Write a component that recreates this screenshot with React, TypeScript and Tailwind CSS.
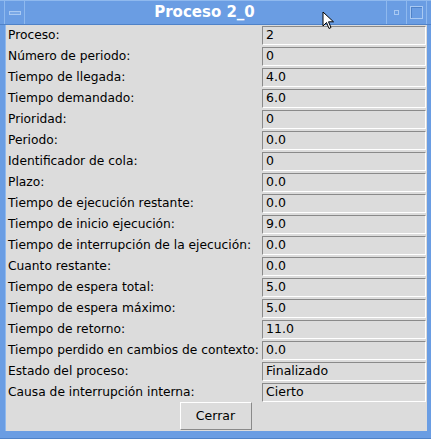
import React from "react";

const rows: [string, string][] = [
  ["Proceso:", "2"],
  ["Número de periodo:", "0"],
  ["Tiempo de llegada:", "4.0"],
  ["Tiempo demandado:", "6.0"],
  ["Prioridad:", "0"],
  ["Periodo:", "0.0"],
  ["Identificador de cola:", "0"],
  ["Plazo:", "0.0"],
  ["Tiempo de ejecución restante:", "0.0"],
  ["Tiempo de inicio ejecución:", "9.0"],
  ["Tiempo de interrupción de la ejecución:", "0.0"],
  ["Cuanto restante:", "0.0"],
  ["Tiempo de espera total:", "5.0"],
  ["Tiempo de espera máximo:", "5.0"],
  ["Tiempo de retorno:", "11.0"],
  ["Tiempo perdido en cambios de contexto:", "0.0"],
  ["Estado del proceso:", "Finalizado"],
  ["Causa de interrupción interna:", "Cierto"],
];

export default function App() {
  return (
    <div className="relative w-[431px] h-[439px] bg-[#6a9de3] flex flex-col font-['DejaVu_Sans',sans-serif] overflow-hidden">
      {/* Title bar */}
      <div className="h-[25px] flex items-stretch border-t border-[#8fb9ee] border-b border-b-[#4f82c8]">
        <div className="w-[5px] border-r border-[#8fb9ee]" />
        <div className="w-[20px] border-r border-[#8fb9ee] flex items-center justify-center">
          <div className="w-[12px] h-[4px] border border-[#a9c9f2] bg-[#7aa8e6]" />
        </div>
        <div className="flex-1 flex items-center justify-center text-white font-bold text-[15px] pr-[2px]">
          Proceso 2_0
        </div>
        <div className="w-[20px] border-l border-[#8fb9ee] flex items-center justify-center">
          <div className="w-[5px] h-[5px] border border-[#a9c9f2]" />
        </div>
        <div className="w-[20px] border-l border-[#8fb9ee] flex items-center justify-center">
          <div className="w-[13px] h-[13px] border border-[#a9c9f2] shadow-[inset_1px_1px_0_#4f82c8]" />
        </div>
        <div className="w-[5px] border-l border-[#8fb9ee]" />
      </div>
      {/* Body */}
      <div className="flex-1 flex pl-[5px] pr-[4px] pb-[7px] border-b border-[#4f82c8]">
        <div className="flex-1 bg-[#dcdcdc] flex flex-col pt-[1px] border-l border-[#8fb9ee]">
          <div className="flex flex-col gap-[2px]">
            {rows.map(([l, v]) => (
              <div key={l} className="flex h-[19px] items-center">
                <div className="w-[256px] pl-[2px] text-[12.25px] text-black leading-none whitespace-nowrap">{l}</div>
                <div className="flex-1 mr-[1px] h-[19px] border border-t-[#8a8a8a] border-l-[#8a8a8a] border-b-white border-r-white bg-[#dcdcdc] flex items-center pl-[3px] text-[12.5px] text-black leading-none">
                  {v}
                </div>
              </div>
            ))}
          </div>
          <div className="flex-1 flex justify-center items-end">
            <button className="w-[72px] h-[28px] mb-[1px] mr-[2px] border border-t-white border-l-white border-b-[#8a8a8a] border-r-[#8a8a8a] bg-[#dcdcdc] text-[12.5px] text-black">
              Cerrar
            </button>
          </div>
        </div>
      </div>
      {/* Mouse cursor */}
      <svg className="absolute left-[322px] top-[11px]" width="13" height="20" viewBox="0 0 13 20">
        <path d="M1 1 L1 15 L4.5 11.5 L7 17.5 L9 16.5 L6.5 10.8 L11.5 10.8 Z" fill="white" stroke="black" strokeWidth="1" strokeLinejoin="miter" />
      </svg>
    </div>
  );
}
